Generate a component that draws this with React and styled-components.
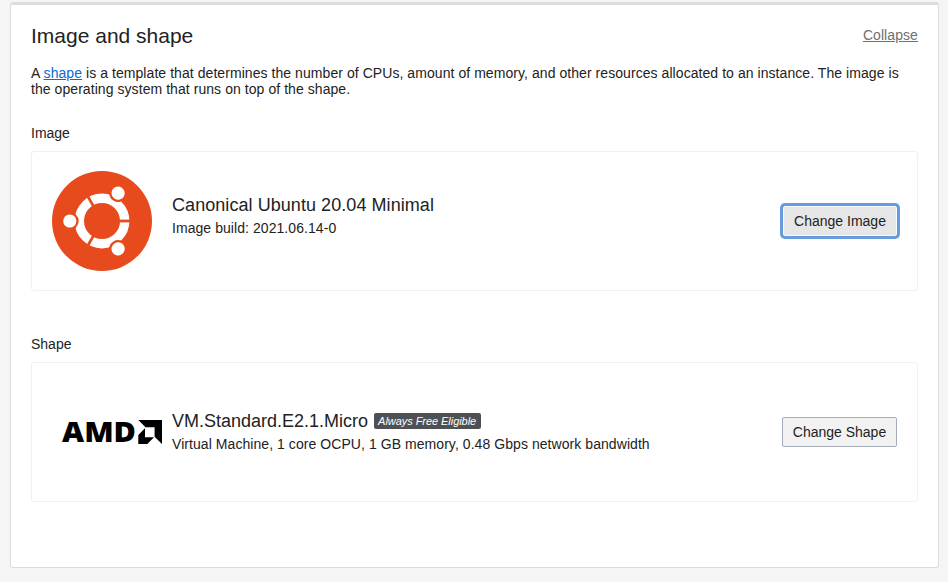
import React from "react";
import styled, { createGlobalStyle } from "styled-components";

const GlobalStyle = createGlobalStyle`
  * { box-sizing: border-box; }
  html, body { margin: 0; background: #f5f5f5; }
  body {
    font-family: "Liberation Sans", Helvetica, Arial, sans-serif;
    font-size: 14px;
    line-height: 16px;
    color: #222;
  }
`;

const Page = styled.main`
  height: 582px;
  padding: 2px 9px 14px 10px;
  overflow: hidden;
`;

const Card = styled.section`
  height: 566px;
  padding: 18px 20px 0;
  background: #fff;
  border: 1px solid #dbdce0;
  border-top: 3px solid #dbdde1;
  border-radius: 3px;
`;

const Header = styled.header`
  display: flex;
  justify-content: space-between;
  height: 42px;
`;

const Title = styled.h2`
  margin: 0;
  font-size: 21px;
  line-height: 26px;
  font-weight: 400;
`;

const Collapse = styled.a`
  margin-top: 4px;
  color: #707070;
  letter-spacing: 0.08px;
  text-decoration: underline;
`;

const Description = styled.p`
  margin: 0 0 28px;
  letter-spacing: 0.062px;
  white-space: nowrap;
`;

const Link = styled.a`
  color: #0b6bcb;
  text-decoration: underline;
`;

const Field = styled.div`
  margin-bottom: 45px;
`;

const Label = styled.div`
  margin-bottom: 10px;
`;

const Panel = styled.div`
  display: flex;
  align-items: center;
  height: 140px;
  padding: 0 20px;
  border: 1px solid #f1f1f1;
  border-radius: 3px;
`;

const Logo = styled.svg`
  flex: none;
  display: block;
  width: ${(p) => p.$width}px;
  height: ${(p) => p.$height}px;
  margin-left: ${(p) => p.$indent || 0}px;
  margin-right: ${(p) => p.$gap}px;
`;

const Details = styled.div`
  flex: 1;
  padding-bottom: ${(p) => p.$lift}px;
`;

const NameRow = styled.div`
  display: flex;
  align-items: center;
  height: 24px;
  margin-bottom: 3px;
`;

const Name = styled.span`
  font-size: 18px;
  line-height: 24px;
  letter-spacing: ${(p) => p.$tracking || "0"};
`;

const Summary = styled.div`
  letter-spacing: 0.062px;
`;

const Badge = styled.span`
  height: 16px;
  margin-left: 6px;
  padding: 0 5px 0 4px;
  border-radius: 2px;
  background: #4d5155;
  color: #fff;
  font-size: 11px;
  font-style: italic;
  letter-spacing: -0.05px;
  line-height: 16px;
  white-space: nowrap;
`;

const Button = styled.button`
  width: ${(p) => (p.$focused ? 114 : 115)}px;
  height: 30px;
  padding: 0;
  border: 1px solid ${(p) => (p.$focused ? "#f6f9fd" : "#a5adb8")};
  border-radius: 2px;
  background: ${(p) => (p.$focused ? "#e6e6e6" : "#f2f2f2")};
  background-clip: padding-box;
  box-shadow: ${(p) => (p.$focused ? "0 0 0 3px #699cde" : "none")};
  color: #222;
  font: inherit;
`;

function UbuntuLogo() {
  return (
    <Logo $width={100} $height={100} $gap={20} viewBox="0 0 100 100">
      <circle cx="50" cy="50" r="50" fill="#e74b1d" />
      <circle cx="50" cy="50" r="22.7" fill="none" stroke="#fff" strokeWidth="9.4" />
      {[0, 120, 240].map((angle) => (
        <g key={angle} transform={`rotate(${angle} 50 50)`}>
          <path d="M66 50H80" stroke="#e74b1d" strokeWidth="2.8" />
          <circle cx="17.8" cy="50" r="8.9" fill="#e74b1d" />
          <circle cx="17.8" cy="50" r="6.6" fill="#fff" />
        </g>
      ))}
    </Logo>
  );
}

function AmdLogo() {
  return (
    <Logo $width={100} $height={44} $indent={10} $gap={10} viewBox="0 -10 100 44">
      <text
        x="0"
        y="22"
        fontFamily="'Open Sans', sans-serif"
        fontWeight="800"
        fontSize="28"
        textLength="74"
        lengthAdjust="spacingAndGlyphs"
      >
        AMD
      </text>
      <path d="M76.3 0H100V24L92.6 16.8V7.3H83.5Z" />
      <path d="M83 8.2V17.2H92L85.3 24H76.3V15Z" />
    </Logo>
  );
}

export default function App() {
  return (
    <>
      <GlobalStyle />
      <Page>
        <Card>
          <Header>
            <Title>Image and shape</Title>
            <Collapse>Collapse</Collapse>
          </Header>
          <Description>
            A <Link>shape</Link> is a template that determines the number of CPUs, amount of memory,
            and other resources allocated to an instance. The image is
            <br />
            the operating system that runs on top of the shape.
          </Description>
          <Field>
            <Label>Image</Label>
            <Panel>
              <UbuntuLogo />
              <Details $lift={13}>
                <NameRow>
                  <Name $tracking="0.06px">Canonical Ubuntu 20.04 Minimal</Name>
                </NameRow>
                <Summary>Image build: 2021.06.14-0</Summary>
              </Details>
              <Button $focused>Change Image</Button>
            </Panel>
          </Field>
          <Field>
            <Label>Shape</Label>
            <Panel>
              <AmdLogo />
              <Details $lift={3}>
                <NameRow>
                  <Name>VM.Standard.E2.1.Micro</Name>
                  <Badge>Always Free Eligible</Badge>
                </NameRow>
                <Summary>
                  Virtual Machine, 1 core OCPU, 1 GB memory, 0.48 Gbps network bandwidth
                </Summary>
              </Details>
              <Button>Change Shape</Button>
            </Panel>
          </Field>
        </Card>
      </Page>
    </>
  );
}
